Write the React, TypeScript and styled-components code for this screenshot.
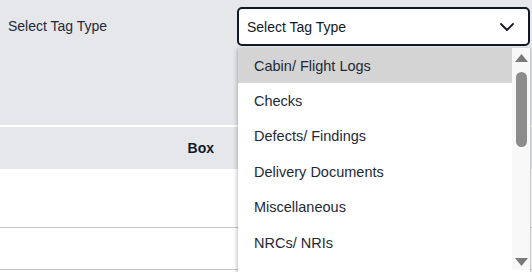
import React from "react";
import styled, { createGlobalStyle } from "styled-components";

const GlobalStyle = createGlobalStyle`
  body {
    margin: 0;
    background: #ffffff;
    font-family: "Liberation Sans", Arial, sans-serif;
    color: #1f2937;
  }
`;

const Page = styled.div`
  position: relative;
  width: 532px;
  height: 272px;
  overflow: hidden;
`;

const FilterPanel = styled.div`
  height: 127px;
  background: #e5e7eb;
  display: flex;
  justify-content: space-between;
  align-items: flex-start;
  padding: 7px 2px 0 8px;
  box-sizing: border-box;
  border-bottom: 2px solid #ffffff;
`;

const Label = styled.div`
  font-size: 14px;
  line-height: 16px;
  margin-top: 11px;
  color: #1f2937;
`;

const SelectWrap = styled.div`
  position: relative;
  width: 293px;
`;

const SelectBox = styled.div`
  height: 39px;
  box-sizing: border-box;
  border: 2px solid #111827;
  border-radius: 5px;
  background: #ffffff;
  display: flex;
  align-items: center;
  justify-content: space-between;
  padding: 0 14px 0 8px;
  font-size: 14px;
  color: #111827;
`;

const Menu = styled.div`
  position: absolute;
  z-index: 2;
  top: 41px;
  left: 1px;
  width: 293px;
  height: 240px;
  box-sizing: border-box;
  background: #ffffff;
  display: flex;
  align-items: flex-start;
  box-shadow: -1px 1px 4px rgba(0, 0, 0, 0.25);
  border-right: 1px solid #c8c8c8;
`;

const OptionList = styled.div`
  flex: 1;
  display: flex;
  flex-direction: column;
`;

const Option = styled.div<{ $active?: boolean }>`
  height: 35.4px;
  flex-shrink: 0;
  display: flex;
  align-items: center;
  padding-left: 16px;
  font-size: 14.5px;
  color: #1f2937;
  background: ${(p) => (p.$active ? "#d4d4d4" : "#ffffff")};
`;

const Scrollbar = styled.div`
  width: 18px;
  height: 222px;
  flex-shrink: 0;
  background: #f8f8f8;
  display: flex;
  flex-direction: column;
  align-items: center;
  justify-content: space-between;
  padding: 6px 0 4px;
  box-sizing: border-box;
`;

const TrackTop = styled.div`
  display: flex;
  flex-direction: column;
  align-items: center;
`;

const Thumb = styled.div`
  width: 11px;
  height: 75px;
  margin-top: 10px;
  border-radius: 5.5px;
  background: #8c8c8c;
`;

const HeaderRow = styled.div`
  height: 42px;
  background: #e5e7eb;
  display: flex;
  align-items: center;
`;

const HeaderCell = styled.div`
  width: 214px;
  text-align: right;
  font-weight: bold;
  font-size: 14px;
  color: #111827;
`;

const Row = styled.div<{ $h: number }>`
  height: ${(p) => p.$h}px;
  border-bottom: 1px solid #c6c6c6;
`;

const Chevron = () => (
  <svg width="14" height="8" viewBox="0 0 14 8" fill="none">
    <path d="M1 1l6 6 6-6" stroke="#111827" strokeWidth="1.8" strokeLinecap="round" strokeLinejoin="round" />
  </svg>
);

const Triangle = ({ down }: { down?: boolean }) => (
  <svg width="13" height="8" viewBox="0 0 13 8" style={{ display: "block", flexShrink: 0 }}>
    <path d={down ? "M0 0h13l-6.5 8z" : "M6.5 0l6.5 8h-13z"} fill="#7a7a7a" />
  </svg>
);

const options = [
  "Cabin/ Flight Logs",
  "Checks",
  "Defects/ Findings",
  "Delivery Documents",
  "Miscellaneous",
  "NRCs/ NRIs",
];

export default function App() {
  return (
    <Page>
      <GlobalStyle />
      <FilterPanel>
        <Label>Select Tag Type</Label>
        <SelectWrap>
          <SelectBox>
            <span>Select Tag Type</span>
            <Chevron />
          </SelectBox>
          <Menu>
            <OptionList>
              {options.map((o, i) => (
                <Option key={o} $active={i === 0}>
                  {o}
                </Option>
              ))}
            </OptionList>
            <Scrollbar>
              <TrackTop>
                <Triangle />
                <Thumb />
              </TrackTop>
              <Triangle down />
            </Scrollbar>
          </Menu>
        </SelectWrap>
      </FilterPanel>
      <HeaderRow>
        <HeaderCell>Box</HeaderCell>
      </HeaderRow>
      <Row $h={58} />
      <Row $h={41} />
    </Page>
  );
}
